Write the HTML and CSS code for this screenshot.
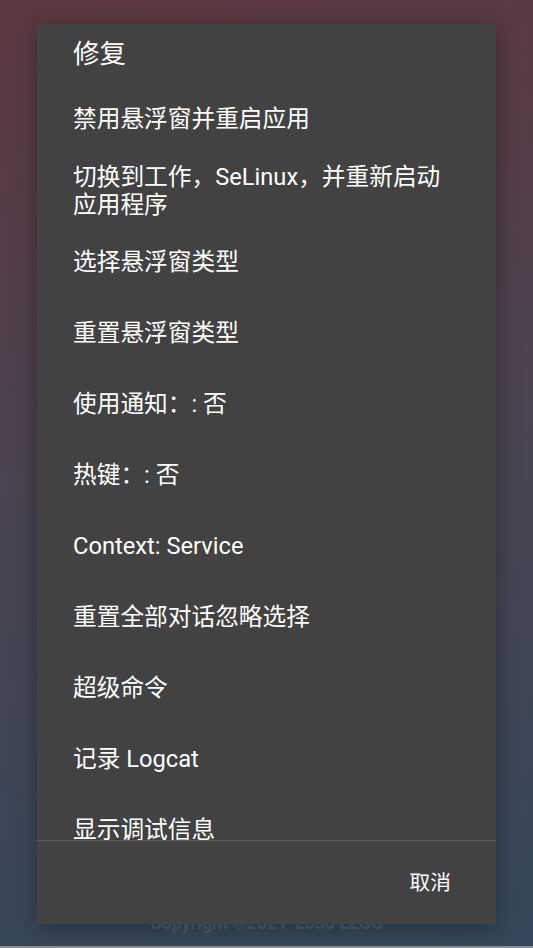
FILE: index.html
```html
<!DOCTYPE html>
<html lang="zh-CN">
<head>
<meta charset="utf-8">
<title>修复</title>
<link rel="stylesheet" href="styles.css">
</head>
<body>
<div class="screen">
  <div class="copyright">Copyright ©2021-2030 ELGG</div>
  <div class="navline"></div>
</div>
<div class="dialog">
  <div class="title">修复</div>
  <div class="list">
    <div class="item">禁用悬浮窗并重启应用</div>
    <div class="item multi">切换到工作，SeLinux，并重新启动应用程序</div>
    <div class="item">选择悬浮窗类型</div>
    <div class="item">重置悬浮窗类型</div>
    <div class="item">使用通知：: 否</div>
    <div class="item">热键：: 否</div>
    <div class="item">Context: Service</div>
    <div class="item">重置全部对话忽略选择</div>
    <div class="item">超级命令</div>
    <div class="item">记录 Logcat</div>
    <div class="item">显示调试信息</div>
  </div>
  <div class="footer">
    <button class="btn">取消</button>
  </div>
</div>
</body>
</html>
```
FILE: styles.css
```css
html, body {
  margin: 0;
  padding: 0;
}
body {
  width: 533px;
  height: 948px;
  overflow: hidden;
  position: relative;
  font-family: Roboto, "Noto Sans CJK SC", sans-serif;
  background: linear-gradient(172deg, #5d3941 0%, #4b4452 48%, #34495a 100%);
}
.screen {
  height: 948px;
  display: flex;
  flex-direction: column;
  justify-content: flex-end;
  align-items: center;
}
.copyright {
  font-family: Roboto, sans-serif;
  font-weight: 700;
  font-size: 17.8px;
  line-height: 22px;
  color: #4f5d6b;
  margin-bottom: 12px;
}
.navline {
  align-self: stretch;
  height: 2px;
  background: #8b8f94;
}
.dialog {
  position: absolute;
  left: 37px;
  top: 24px;
  width: 459px;
  height: 900px;
  background: #424242;
  box-shadow: 0 4px 24px rgba(0, 0, 0, 0.35);
  display: flex;
  flex-direction: column;
}
.title {
  height: 59.5px;
  flex: none;
  box-sizing: border-box;
  padding: 12px 36px 0;
  font-size: 26.5px;
  line-height: 36px;
  color: #ffffff;
}
.list {
  height: 756.5px;
  flex: none;
  overflow: hidden;
}
.item {
  box-sizing: border-box;
  min-height: 71px;
  padding: 8px 36px;
  display: flex;
  align-items: center;
  font-size: 23.7px;
  line-height: 28px;
  color: #ffffff;
}
.item.multi {
  min-height: 72px;
}
.footer {
  border-top: 1px solid #5c5c5c;
  flex: 1;
  display: flex;
  justify-content: flex-end;
  align-items: center;
  padding-right: 36px;
}
.btn {
  background: none;
  border: none;
  padding: 0 9px;
  margin-bottom: 0;
  font-family: Roboto, "Noto Sans CJK SC", sans-serif;
  font-size: 20.7px;
  line-height: 30px;
  color: #ffffff;
}
```
